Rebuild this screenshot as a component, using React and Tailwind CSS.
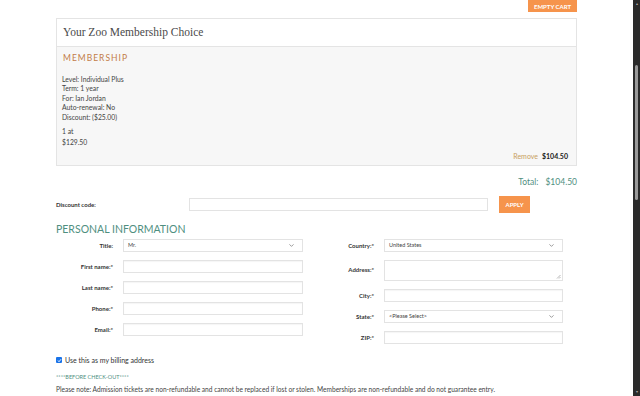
import { ChevronDown } from "lucide-react";

const lato = { fontFamily: "Lato, 'Open Sans', sans-serif" };

function Field({ label, children, labelW }) {
  return (
    <div className="flex items-center">
      <div className={`${labelW} pr-[10px] text-right text-[6px] font-bold text-[#333]`}>{label}</div>
      {children}
    </div>
  );
}

function Input({ w = "w-[180px]", h = "h-[13px]" }) {
  return <div className={`${w} ${h} border border-[#e3e3e3] bg-white shadow-[inset_0_1px_1px_rgba(0,0,0,0.04)]`} />;
}

function Select({ w = "w-[180px]", value }) {
  return (
    <div className={`${w} h-[13px] border border-[#e3e3e3] bg-white flex items-center justify-between px-[4px] text-[5.5px] text-[#444]`}>
      <span>{value}</span>
      <ChevronDown size={7} strokeWidth={2} className="text-[#555] mr-[3px]" />
    </div>
  );
}

export default function App() {
  return (
    <div className="flex h-[396px] w-[640px] overflow-hidden bg-white text-[#333]" style={lato}>
      <div className="flex-1">
        <div className="w-[521px] mx-auto">
          <div className="flex justify-end h-[12px]">
            <div className="bg-[#f6944c] text-white text-[6px] font-bold px-[6px] h-[12px] flex items-center">EMPTY CART</div>
          </div>
          <div className="mt-[6px] border border-[#e4e4e4]">
            <div className="h-[28px] flex items-center px-[6px] bg-white border-b border-[#e4e4e4]">
              <span className="text-[11.5px] text-[#4a4a4a]" style={{ fontFamily: "'Liberation Serif', serif" }}>Your Zoo Membership Choice</span>
            </div>
            <div className="bg-[#f7f7f7] px-[5px] pt-[5px] pb-[4px] h-[118px] flex flex-col">
              <div className="text-[8.5px] tracking-[1px] text-[#c27c48] ml-[1px]">MEMBERSHIP</div>
              <div className="mt-[10px] text-[6.8px] leading-[9.5px] text-[#444]">
                <div>Level: Individual Plus</div>
                <div>Term: 1 year</div>
                <div>For: Ian Jordan</div>
                <div>Auto-renewal: No</div>
                <div>Discount: ($25.00)</div>
              </div>
              <div className="mt-[4px] text-[6.8px] leading-[11px] text-[#444]">
                <div>1 at</div>
                <div>$129.50</div>
              </div>
              <div className="mt-auto flex justify-end items-center gap-[4px] text-[7px] pr-[3px]">
                <span className="text-[#c8a060]">Remove</span>
                <span className="font-bold text-[#222]">$104.50</span>
              </div>
            </div>
          </div>
          <div className="flex justify-end gap-[7px] mt-[10px] text-[8.5px] text-[#4f8f7f]">
            <span>Total:</span>
            <span>$104.50</span>
          </div>
          <div className="flex items-center mt-[7px]">
            <div className="w-[133px] text-[6px] font-bold text-[#333]">Discount code:</div>
            <div className="w-[299px] h-[13px] border border-[#e3e3e3] bg-white" />
            <div className="ml-[11px] bg-[#f6944c] text-white text-[6px] font-bold w-[31px] h-[17px] flex items-center justify-center">APPLY</div>
          </div>
          <div className="mt-[10px] text-[10.5px] text-[#4f8f7f] leading-[12px]">PERSONAL INFORMATION</div>
          <div className="flex mt-[4px]">
            <div className="flex flex-col gap-[8px] w-[257px]">
              <Field label="Title:" labelW="w-[67px]"><Select value="Mr." /></Field>
              <Field label="First name:*" labelW="w-[67px]"><Input /></Field>
              <Field label="Last name:*" labelW="w-[67px]"><Input /></Field>
              <Field label="Phone:*" labelW="w-[67px]"><Input /></Field>
              <Field label="Email:*" labelW="w-[67px]"><Input /></Field>
            </div>
            <div className="flex flex-col gap-[8px]">
              <Field label="Country:*" labelW="w-[71px]"><Select w="w-[179px]" value="United States" /></Field>
              <div className="flex items-start">
                <div className="w-[71px] pr-[10px] pt-[5px] text-right text-[6px] font-bold text-[#333]">Address:*</div>
                <div className="relative w-[179px] h-[21px] border border-[#e3e3e3] bg-white">
                  <svg width="5" height="5" className="absolute right-[1px] bottom-[1px]" viewBox="0 0 5 5">
                    <path d="M4.5 1 L1 4.5 M4.5 3 L3 4.5" stroke="#999" strokeWidth="0.7" />
                  </svg>
                </div>
              </div>
              <Field label="City:*" labelW="w-[71px]"><Input w="w-[179px]" /></Field>
              <Field label="State:*" labelW="w-[71px]"><Select w="w-[179px]" value="<Please Select>" /></Field>
              <Field label="ZIP:*" labelW="w-[71px]"><Input w="w-[179px]" /></Field>
            </div>
          </div>
          <div className="mt-[11px] flex items-center gap-[3px] text-[7px] text-[#333]">
            <div className="w-[6px] h-[6px] rounded-[1px] bg-[#1a73e8] flex items-center justify-center">
              <svg width="5" height="5" viewBox="0 0 10 10"><path d="M2 5 L4 7.5 L8 2.5" stroke="white" strokeWidth="1.8" fill="none" /></svg>
            </div>
            <span>Use this as my billing address</span>
          </div>
          <div className="mt-[8px] text-[5.5px] text-[#4f8f7f]">****BEFORE CHECK-OUT****</div>
          <div className="mt-[3px] text-[6.6px] text-[#444] whitespace-nowrap">Please note: Admission tickets are non-refundable and cannot be replaced if lost or stolen. Memberships are non-refundable and do not guarantee entry.</div>
        </div>
      </div>
      <div className="w-[7px] bg-[#2b2b2b] flex flex-col items-center">
        <div className="text-[4px] text-[#aaa] mt-[1px]">▴</div>
        <div className="w-[3px] h-[135px] bg-[#9a9a9a] rounded-full mt-[58px]" />
        <div className="mt-auto text-[4px] text-[#aaa] mb-[1px]">▾</div>
      </div>
    </div>
  );
}
